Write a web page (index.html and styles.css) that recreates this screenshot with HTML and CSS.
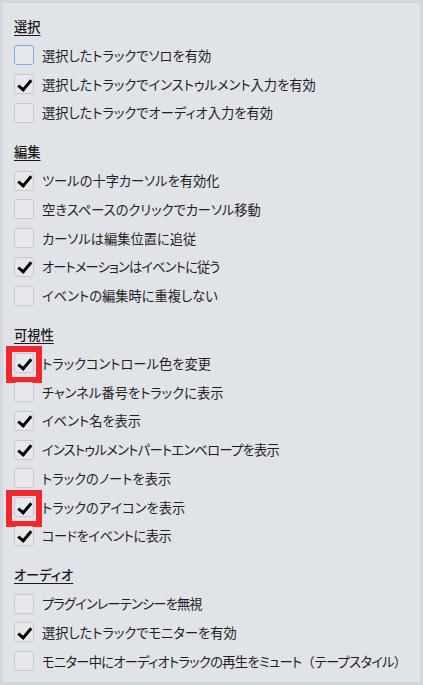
FILE: index.html
```html
<!DOCTYPE html>
<html lang="ja">
<head>
<meta charset="utf-8">
<link rel="stylesheet" href="styles.css">
</head>
<body>
<div class="panel">
  <section class="group">
    <h3 class="head">選択</h3>
    <div class="row"><span class="box focus"></span><span class="label">選択したトラックでソロを有効</span></div>
    <div class="row"><span class="box on"></span><span class="label">選択したトラックでインストゥルメント入力を有効</span></div>
    <div class="row"><span class="box"></span><span class="label">選択したトラックでオーディオ入力を有効</span></div>
  </section>
  <section class="group">
    <h3 class="head">編集</h3>
    <div class="row"><span class="box on"></span><span class="label">ツールの十字カーソルを有効化</span></div>
    <div class="row"><span class="box"></span><span class="label">空きスペースのクリックでカーソル移動</span></div>
    <div class="row"><span class="box"></span><span class="label">カーソルは編集位置に追従</span></div>
    <div class="row"><span class="box on"></span><span class="label tight-3">オートメーションはイベントに従う</span></div>
    <div class="row"><span class="box"></span><span class="label">イベントの編集時に重複しない</span></div>
  </section>
  <section class="group">
    <h3 class="head">可視性</h3>
    <div class="row"><span class="box on mark"></span><span class="label">トラックコントロール色を変更</span></div>
    <div class="row"><span class="box"></span><span class="label">チャンネル番号をトラックに表示</span></div>
    <div class="row"><span class="box on"></span><span class="label">イベント名を表示</span></div>
    <div class="row"><span class="box on"></span><span class="label tight-2">インストゥルメントパートエンベロープを表示</span></div>
    <div class="row"><span class="box"></span><span class="label">トラックのノートを表示</span></div>
    <div class="row"><span class="box on mark"></span><span class="label">トラックのアイコンを表示</span></div>
    <div class="row"><span class="box on"></span><span class="label tight-1">コードをイベントに表示</span></div>
  </section>
  <section class="group">
    <h3 class="head">オーディオ</h3>
    <div class="row"><span class="box"></span><span class="label tight-3">プラグインレーテンシーを無視</span></div>
    <div class="row"><span class="box on"></span><span class="label">選択したトラックでモニターを有効</span></div>
    <div class="row"><span class="box"></span><span class="label tight-2">モニター中にオーディオトラックの再生をミュート<span class="paren">（</span>テープスタイル<span class="paren">）</span></span></div>
  </section>
</div>
</body>
</html>
```
FILE: styles.css
```css
html, body {
  margin: 0;
  padding: 0;
  background: #d4d7db;
}
body {
  width: 423px;
  height: 685px;
  font-family: "Noto Sans CJK JP", "Noto Sans", sans-serif;
  color: #1f1f1f;
  font-feature-settings: "palt";
}
.panel {
  box-sizing: border-box;
  width: 423px;
  height: 685px;
  border: 3px solid #d3d6da;
  background: #e0e3e7;
  padding: 9px 0 0 11px;
}
.group {
  margin-bottom: 10px;
}
.head {
  margin: 0;
  height: 29px;
  line-height: 29px;
  font-size: 13.25px;
  font-weight: 500;
  text-decoration: underline;
  text-underline-offset: 3px;
  text-decoration-thickness: 1px;
  color: #1a1a1a;
}
.row {
  height: 28.75px;
  display: flex;
  align-items: center;
  gap: 8px;
}
.box {
  box-sizing: border-box;
  width: 20px;
  height: 20px;
  border: 1px solid #c5c8cd;
  border-radius: 3px;
  background: #e6e8eb;
  flex: none;
  position: relative;
}
.box.focus {
  border: 1.5px solid #7aaef0;
}
.box.on::after {
  content: "";
  position: absolute;
  left: 6px;
  top: 1.5px;
  width: 5px;
  height: 10.5px;
  border-right: 3px solid #000;
  border-bottom: 3px solid #000;
  transform: rotate(40deg);
  transform-origin: center;
}
.box.mark::before {
  content: "";
  position: absolute;
  left: -9px;
  top: -8px;
  width: 24px;
  height: 25px;
  border: 6px solid #f4262b;
}
.label {
  font-size: 13.25px;
  line-height: 1;
  white-space: nowrap;
}
.label.tight-1 {
  letter-spacing: -0.5px;
}
.label.tight-2 {
  letter-spacing: -0.7px;
}
.label.tight-3 {
  letter-spacing: -0.85px;
}
.paren {
  font-feature-settings: normal;
  letter-spacing: 0;
}
```
